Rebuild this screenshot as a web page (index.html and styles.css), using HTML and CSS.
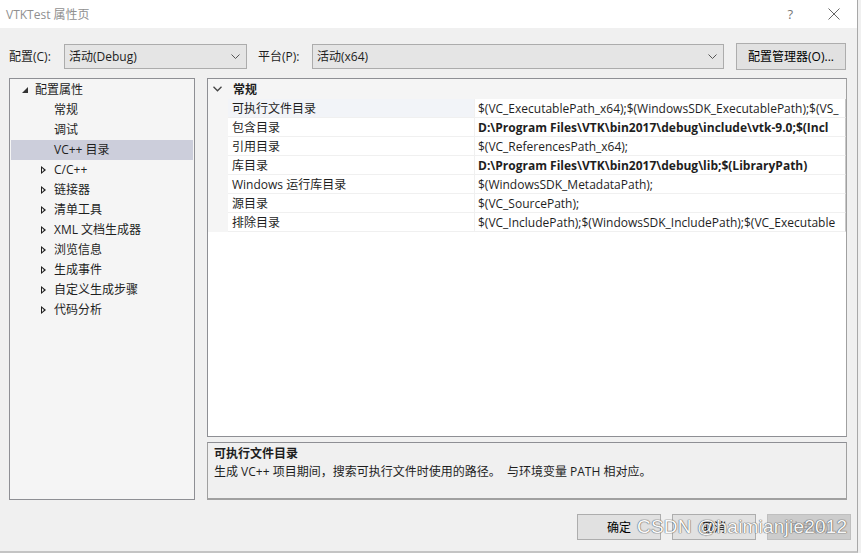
FILE: index.html
```html
<!DOCTYPE html>
<html lang="zh-CN">
<head>
    <meta charset="UTF-8">
    <title>VTKTest 属性页</title>
    <link rel="stylesheet" href="styles.css">
</head>
<body>
    <div class="dialog">
        <div class="titlebar">
            <span class="title">VTKTest 属性页</span>
            <span class="help">?</span>
            <svg class="close" width="12" height="12" viewBox="0 0 12 12">
                <path d="M0.5 0.5L11.5 11.5M11.5 0.5L0.5 11.5" stroke="#666" stroke-width="1" fill="none"/>
            </svg>
        </div>

        <div class="toolbar">
            <label class="lbl">配置(C):</label>
            <div class="combo combo-config">
                <span>活动(Debug)</span>
                <svg width="9" height="5" viewBox="0 0 9 5"><path d="M0.5 0.5L4.5 4.5L8.5 0.5" stroke="#555" fill="none"/></svg>
            </div>
            <label class="lbl lbl-platform">平台(P):</label>
            <div class="combo combo-platform">
                <span>活动(x64)</span>
                <svg width="9" height="5" viewBox="0 0 9 5"><path d="M0.5 0.5L4.5 4.5L8.5 0.5" stroke="#555" fill="none"/></svg>
            </div>
            <button class="btn btn-manager">配置管理器(O)...</button>
        </div>

        <div class="main">
            <div class="tree">
                <div class="node root"><span class="arrow-open"></span>配置属性</div>
                <div class="node leaf">常规</div>
                <div class="node leaf">调试</div>
                <div class="node leaf selected">VC++ 目录</div>
                <div class="node"><span class="arrow"></span>C/C++</div>
                <div class="node"><span class="arrow"></span>链接器</div>
                <div class="node"><span class="arrow"></span>清单工具</div>
                <div class="node"><span class="arrow"></span>XML 文档生成器</div>
                <div class="node"><span class="arrow"></span>浏览信息</div>
                <div class="node"><span class="arrow"></span>生成事件</div>
                <div class="node"><span class="arrow"></span>自定义生成步骤</div>
                <div class="node"><span class="arrow"></span>代码分析</div>
            </div>

            <div class="right">
                <div class="grid">
                    <div class="category">
                        <svg class="chev" width="9" height="6" viewBox="0 0 9 6"><path d="M0.5 0.8L4.5 4.8L8.5 0.8" stroke="#444" stroke-width="1.3" fill="none"/></svg>
                        <span>常规</span>
                    </div>
                    <div class="prop current">
                        <div class="name">可执行文件目录</div>
                        <div class="value">$(VC_ExecutablePath_x64);$(WindowsSDK_ExecutablePath);$(VS_</div>
                    </div>
                    <div class="prop">
                        <div class="name">包含目录</div>
                        <div class="value bold">D:\Program Files\VTK\bin2017\debug\include\vtk-9.0;$(Incl</div>
                    </div>
                    <div class="prop">
                        <div class="name">引用目录</div>
                        <div class="value">$(VC_ReferencesPath_x64);</div>
                    </div>
                    <div class="prop">
                        <div class="name">库目录</div>
                        <div class="value bold">D:\Program Files\VTK\bin2017\debug\lib;$(LibraryPath)</div>
                    </div>
                    <div class="prop">
                        <div class="name">Windows 运行库目录</div>
                        <div class="value">$(WindowsSDK_MetadataPath);</div>
                    </div>
                    <div class="prop">
                        <div class="name">源目录</div>
                        <div class="value">$(VC_SourcePath);</div>
                    </div>
                    <div class="prop">
                        <div class="name">排除目录</div>
                        <div class="value">$(VC_IncludePath);$(WindowsSDK_IncludePath);$(VC_Executable</div>
                    </div>
                </div>
                <div class="desc">
                    <div class="desc-title">可执行文件目录</div>
                    <div class="desc-text">生成 VC++ 项目期间，搜索可执行文件时使用的路径。&nbsp; 与环境变量 PATH 相对应。</div>
                </div>
            </div>
        </div>

        <div class="buttons">
            <button class="btn">确定</button>
            <button class="btn">取消</button>
            <button class="btn disabled">应用(A)</button>
            <span class="watermark">CSDN @haimianjie2012</span>
        </div>
    </div>
</body>
</html>
```

FILE: styles.css
```css
body {
    margin: 0;
    width: 861px;
    height: 553px;
    overflow: hidden;
    background-color: #f0f0f0;
    font-family: "Open Sans", "Noto Sans CJK SC", sans-serif;
    font-size: 12px;
    color: #1e1e1e;
}

.dialog {
    width: 857px;
    height: 551px;
    background-color: #f0f0f0;
    border-right: 1px solid #a8a8a8;
    border-bottom: 2px solid #c4c4c4;
    position: relative;
}

.titlebar {
    height: 28px;
    background-color: #ffffff;
    display: flex;
    align-items: center;
    padding-left: 6px;
}

.title {
    color: #909090;
    font-size: 12px;
    flex: 1;
}

.help {
    color: #777;
    font-size: 13px;
    margin-right: 35px;
}

.close {
    margin-right: 17px;
}

.toolbar {
    display: flex;
    align-items: center;
    height: 28px;
    margin-top: 14px;
    padding-left: 9px;
}

.lbl {
    width: 55px;
}

.lbl-platform {
    margin-left: 11px;
    width: 54px;
}

.combo {
    border: 1px solid #acacac;
    background-color: #e5e5e5;
    display: flex;
    align-items: center;
    justify-content: space-between;
    padding: 0 6px 0 4px;
    box-sizing: border-box;
    height: 25px;
}

.combo-config {
    width: 183px;
}

.combo-platform {
    width: 412px;
}

.btn {
    font-family: "Open Sans", "Noto Sans CJK SC", sans-serif;
    font-size: 12px;
    color: #000;
    background-color: #e1e1e1;
    border: 1px solid #adadad;
    height: 26px;
    width: 84px;
    padding: 0;
}

.btn-manager {
    margin-left: 12px;
    width: 110px;
    height: 27px;
}

.main {
    display: flex;
    margin-top: 8px;
    padding-left: 9px;
}

.tree {
    width: 186px;
    height: 422px;
    box-sizing: border-box;
    border: 1px solid #8e8f94;
    background-color: #f5f5f5;
    padding: 1px 1px;
}

.node {
    height: 20px;
    line-height: 20px;
    padding-left: 43px;
    position: relative;
    white-space: nowrap;
}

.node.root {
    padding-left: 24px;
}

.node.selected {
    background-color: #cccedb;
}

.arrow {
    position: absolute;
    left: 30px;
    top: 6px;
    width: 0;
    height: 0;
    border-top: 4px solid transparent;
    border-bottom: 4px solid transparent;
    border-left: 5px solid #1e1e1e;
}

.arrow::after {
    content: "";
    position: absolute;
    left: -4px;
    top: -2px;
    border-top: 2px solid transparent;
    border-bottom: 2px solid transparent;
    border-left: 2px solid #f5f5f5;
}

.arrow-open {
    position: absolute;
    left: 11px;
    top: 7px;
    width: 0;
    height: 0;
    border-left: 6px solid transparent;
    border-bottom: 6px solid #333;
}

.right {
    margin-left: 12px;
    width: 640px;
}

.grid {
    height: 359px;
    box-sizing: border-box;
    border: 1px solid #8e8f94;
    border-right-color: #a0a0a0;
    background-color: #ffffff;
}

.category {
    height: 20px;
    display: flex;
    align-items: center;
    background-color: #f5f5f5;
    font-weight: bold;
}

.chev {
    margin-left: 5px;
    margin-right: 11px;
}

.prop {
    display: flex;
    height: 19px;
    line-height: 19px;
    border-left: 20px solid #f5f5f5;
}

.prop .name {
    width: 242px;
    padding-left: 4px;
    border-bottom: 1px solid #f0f0f0;
    border-right: 1px solid #f0f0f0;
    white-space: nowrap;
}

.prop .value {
    width: 367px;
    padding-left: 3px;
    border-bottom: 1px solid #f0f0f0;
    white-space: nowrap;
    overflow: hidden;
    border-right: 1px solid #c8c8c8;
}

.prop.current .name {
    background-color: #f2f4f8;
}

.value.bold {
    font-weight: bold;
}

.desc {
    margin-top: 5px;
    height: 58px;
    box-sizing: border-box;
    border: 1px solid #a0a0a0;
    border-top-color: #8e8f94;
    border-bottom: 2px solid #a0a0a0;
    padding: 2px 6px;
}

.desc-title {
    font-weight: bold;
    line-height: 18px;
}

.desc-text {
    line-height: 18px;
}

.buttons {
    display: flex;
    gap: 11px;
    padding-left: 577px;
    margin-top: 14px;
    position: relative;
}

.btn.disabled {
    background-color: #cccccc;
    border-color: #bfbfbf;
    color: #a0a0a0;
}

.watermark {
    position: absolute;
    left: 637px;
    top: 2px;
    font-family: "Liberation Sans", sans-serif;
    font-size: 19px;
    color: #ffffff;
    letter-spacing: 0.2px;
    text-shadow: 0 0 1px #555, 0 0 1px #555, 0 0 1px #555;
    opacity: 0.85;
}
```
